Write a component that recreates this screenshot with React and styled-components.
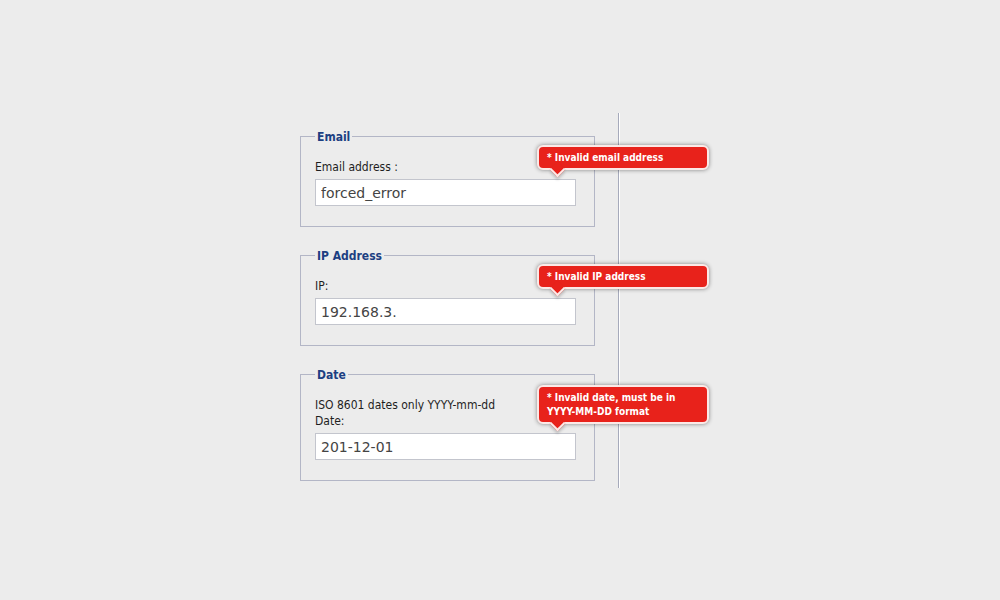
import React from "react";
import styled, { createGlobalStyle } from "styled-components";

const GlobalStyle = createGlobalStyle`
  html, body {
    margin: 0;
    padding: 0;
    background: #ececec;
  }
  body {
    font-family: "DejaVu Sans Condensed", "DejaVu Sans", sans-serif;
  }
`;

const fields = [
  {
    legend: "Email",
    labels: ["Email address :"],
    value: "forced_error",
    error: ["* Invalid email address"],
  },
  {
    legend: "IP Address",
    labels: ["IP:"],
    value: "192.168.3.",
    error: ["* Invalid IP address"],
  },
  {
    legend: "Date",
    labels: ["ISO 8601 dates only YYYY-mm-dd", "Date:"],
    value: "201-12-01",
    error: ["* Invalid date, must be in", "YYYY-MM-DD format"],
  },
];

const App = () => {
  return (
    <Page>
      <GlobalStyle />
      <Column>
        {fields.map((f) => (
          <FieldSet key={f.legend}>
            <Legend>{f.legend}</Legend>
            {f.labels.map((l) => (
              <Label key={l}>{l}</Label>
            ))}
            <InputWrap>
              <Input defaultValue={f.value} readOnly />
              <ErrorTip>
                {f.error.map((e) => (
                  <div key={e}>{e}</div>
                ))}
              </ErrorTip>
            </InputWrap>
          </FieldSet>
        ))}
      </Column>
    </Page>
  );
};

const Page = styled.div`
  width: 1000px;
  height: 600px;
  box-sizing: border-box;
  padding: 113px 0 0 300px;
`;

const Column = styled.div`
  width: 319px;
  box-sizing: border-box;
  padding: 15px 23px 7px 0;
  border-right: 1px solid #a6aabb;
  box-shadow: 1px 0 0 #ffffff;
  display: flex;
  flex-direction: column;
  gap: 20px;
`;

const FieldSet = styled.fieldset`
  margin: 0;
  padding: 15px 19px 20px 14px;
  border: 1px solid #b3b6c6;
  min-width: 0;
`;

const Legend = styled.legend`
  padding: 0 2px;
  font-weight: bold;
  font-size: 12px;
  line-height: 16px;
  color: #1c3f82;
  transform: translateY(1px);
`;

const Label = styled.div`
  font-size: 12px;
  line-height: 16px;
  color: #1e1e1e;
`;

const InputWrap = styled.div`
  position: relative;
  margin-top: 4px;
`;

const Input = styled.input`
  display: block;
  width: 261px;
  height: 27px;
  box-sizing: border-box;
  margin: 0;
  padding: 0 5px;
  border: 1px solid #c3c5cd;
  background: #ffffff;
  font-family: "DejaVu Sans", sans-serif;
  font-size: 14px;
  color: #444444;
  outline: none;
`;

const ErrorTip = styled.div`
  position: absolute;
  left: 222px;
  bottom: calc(100% + 9px);
  width: 172px;
  box-sizing: border-box;
  padding: 4px 8px 3px;
  background: #e8221b;
  border: 2px solid #fbe9e7;
  border-radius: 6px;
  box-shadow: 0 0 4px rgba(0, 0, 0, 0.45);
  color: #ffffff;
  font-weight: bold;
  font-size: 10px;
  line-height: 14px;
  white-space: nowrap;

  &::after {
    content: "";
    position: absolute;
    left: 13px;
    bottom: -7px;
    width: 9px;
    height: 9px;
    background: #e8221b;
    border-right: 2px solid #fbe9e7;
    border-bottom: 2px solid #fbe9e7;
    transform: rotate(45deg);
    box-shadow: 2px 2px 3px rgba(0, 0, 0, 0.2);
  }
`;

export default App;
